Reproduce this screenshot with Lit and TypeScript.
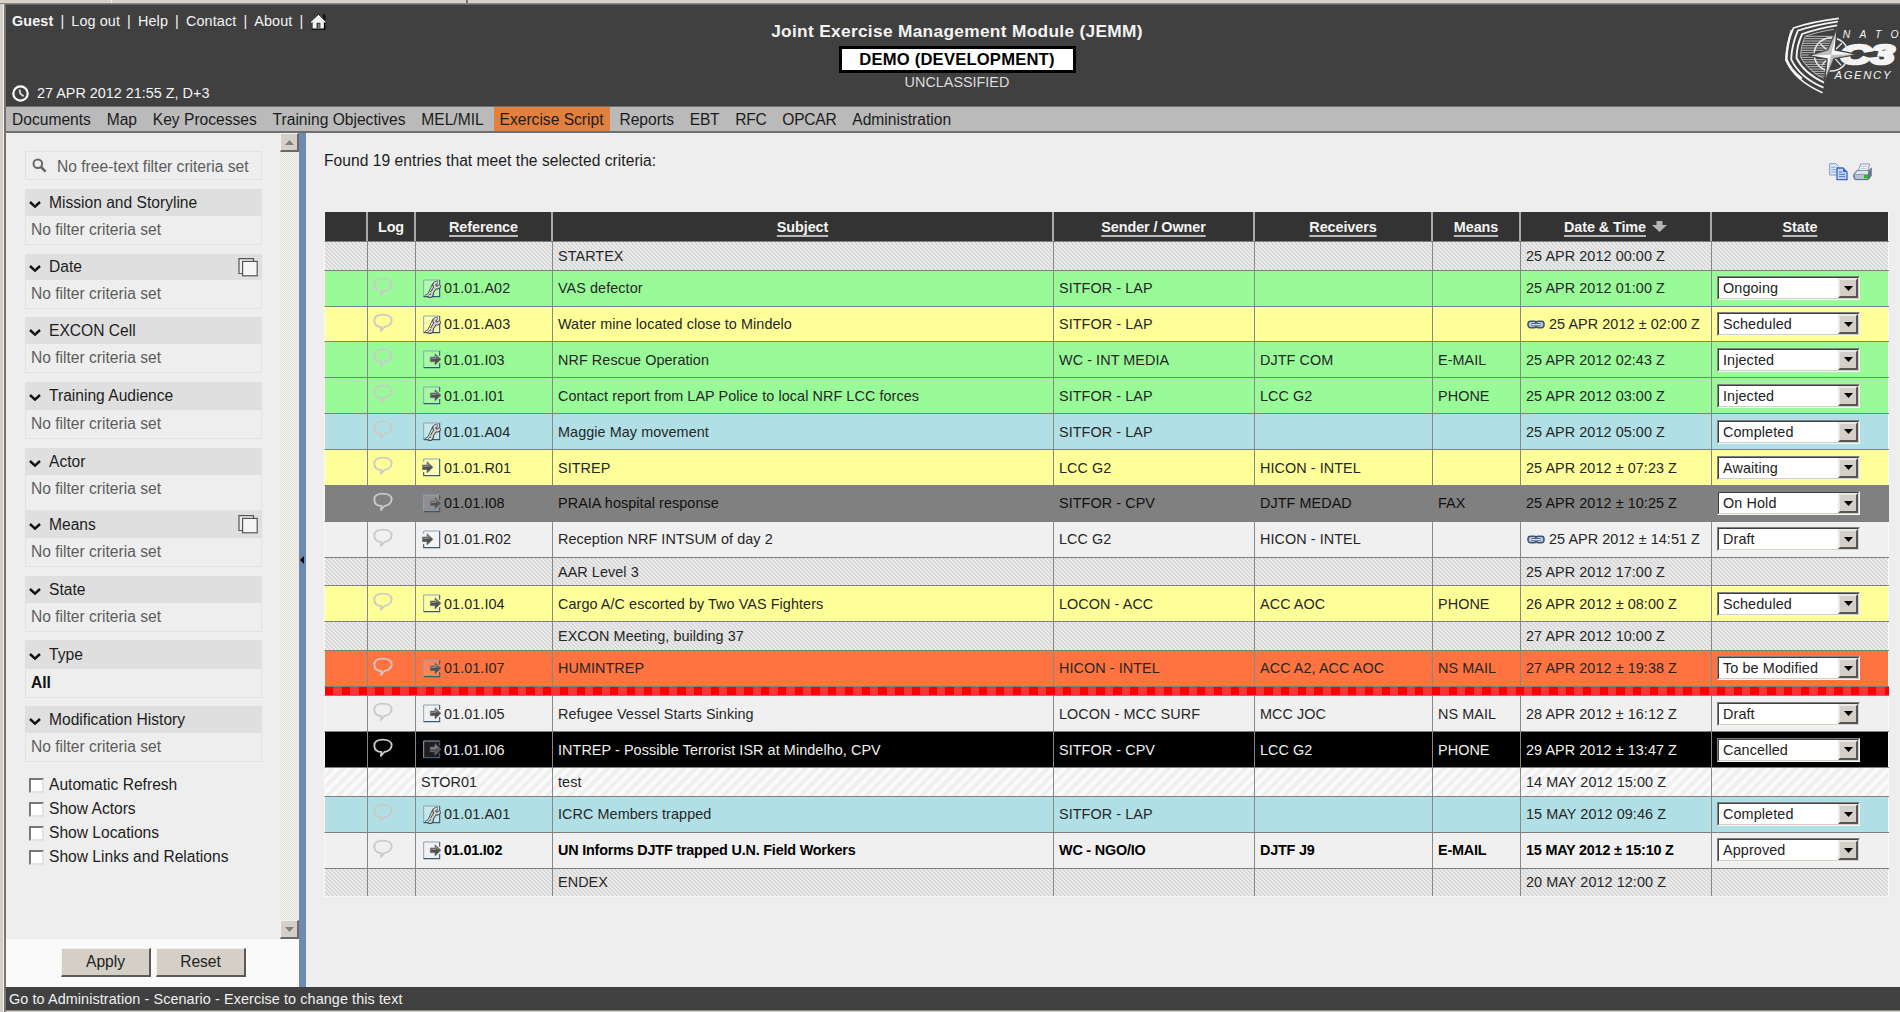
import { LitElement, html, css, svg, nothing } from "lit";
import { customElement, property } from "lit/decorators.js";

type Kind = "action" | "inject" | "report";
interface Entry {
  tone: string;
  icon?: Kind;
  ref?: string;
  subject?: string;
  sender?: string;
  receivers?: string;
  means?: string;
  linked?: boolean;
  date?: string;
  state?: string;
}

const entries: Entry[] = [
  { tone: "marker", subject: "STARTEX", date: "25 APR 2012 00:00 Z" },
  { tone: "green", icon: "action", ref: "01.01.A02", subject: "VAS defector", sender: "SITFOR - LAP", date: "25 APR 2012 01:00 Z", state: "Ongoing" },
  { tone: "yellow", icon: "action", ref: "01.01.A03", subject: "Water mine located close to Mindelo", sender: "SITFOR - LAP", linked: true, date: "25 APR 2012 ± 02:00 Z", state: "Scheduled" },
  { tone: "green", icon: "inject", ref: "01.01.I03", subject: "NRF Rescue Operation", sender: "WC - INT MEDIA", receivers: "DJTF COM", means: "E-MAIL", date: "25 APR 2012 02:43 Z", state: "Injected" },
  { tone: "green", icon: "inject", ref: "01.01.I01", subject: "Contact report from LAP Police to local NRF LCC forces", sender: "SITFOR - LAP", receivers: "LCC G2", means: "PHONE", date: "25 APR 2012 03:00 Z", state: "Injected" },
  { tone: "blue", icon: "action", ref: "01.01.A04", subject: "Maggie May movement", sender: "SITFOR - LAP", date: "25 APR 2012 05:00 Z", state: "Completed" },
  { tone: "yellow", icon: "report", ref: "01.01.R01", subject: "SITREP", sender: "LCC G2", receivers: "HICON - INTEL", date: "25 APR 2012 ± 07:23 Z", state: "Awaiting" },
  { tone: "hold", icon: "inject", ref: "01.01.I08", subject: "PRAIA hospital response", sender: "SITFOR - CPV", receivers: "DJTF MEDAD", means: "FAX", date: "25 APR 2012 ± 10:25 Z", state: "On Hold" },
  { tone: "plain", icon: "report", ref: "01.01.R02", subject: "Reception NRF INTSUM of day 2", sender: "LCC G2", receivers: "HICON - INTEL", linked: true, date: "25 APR 2012 ± 14:51 Z", state: "Draft" },
  { tone: "marker", subject: "AAR Level 3", date: "25 APR 2012 17:00 Z" },
  { tone: "yellow", icon: "inject", ref: "01.01.I04", subject: "Cargo A/C escorted by Two VAS Fighters", sender: "LOCON - ACC", receivers: "ACC AOC", means: "PHONE", date: "26 APR 2012 ± 08:00 Z", state: "Scheduled" },
  { tone: "marker", subject: "EXCON Meeting, building 37", date: "27 APR 2012 10:00 Z" },
  { tone: "orange", icon: "inject", ref: "01.01.I07", subject: "HUMINTREP", sender: "HICON - INTEL", receivers: "ACC A2, ACC AOC", means: "NS MAIL", date: "27 APR 2012 ± 19:38 Z", state: "To be Modified" },
  { tone: "now" },
  { tone: "plain", icon: "inject", ref: "01.01.I05", subject: "Refugee Vessel Starts Sinking", sender: "LOCON - MCC SURF", receivers: "MCC JOC", means: "NS MAIL", date: "28 APR 2012 ± 16:12 Z", state: "Draft" },
  { tone: "cancelled", icon: "inject", ref: "01.01.I06", subject: "INTREP - Possible Terrorist ISR at Mindelho, CPV", sender: "SITFOR - CPV", receivers: "LCC G2", means: "PHONE", date: "29 APR 2012 ± 13:47 Z", state: "Cancelled" },
  { tone: "story", ref: "STOR01", subject: "test", date: "14 MAY 2012 15:00 Z" },
  { tone: "blue", icon: "action", ref: "01.01.A01", subject: "ICRC Members trapped", sender: "SITFOR - LAP", date: "15 MAY 2012 09:46 Z", state: "Completed" },
  { tone: "plain strong", icon: "inject", ref: "01.01.I02", subject: "UN Informs DJTF trapped U.N. Field Workers", sender: "WC - NGO/IO", receivers: "DJTF J9", means: "E-MAIL", date: "15 MAY 2012 ± 15:10 Z", state: "Approved" },
  { tone: "marker", subject: "ENDEX", date: "20 MAY 2012 12:00 Z" },
];

/* Filter panels: title, heading height, body height, gap below. */
const filters: { title: string; head: number; body: number; gap: number; multi?: boolean; value?: string }[] = [
  { title: "Mission and Storyline", head: 27, body: 28, gap: 10 },
  { title: "Date", head: 26, body: 28, gap: 9, multi: true },
  { title: "EXCON Cell", head: 27, body: 28, gap: 10 },
  { title: "Training Audience", head: 28, body: 28, gap: 10 },
  { title: "Actor", head: 27, body: 36, gap: 0 },
  { title: "Means", head: 27, body: 28, gap: 10, multi: true },
  { title: "State", head: 27, body: 28, gap: 9 },
  { title: "Type", head: 29, body: 28, gap: 9, value: "All" },
  { title: "Modification History", head: 27, body: 28, gap: 12 },
];

const menu = ["Documents", "Map", "Key Processes", "Training Objectives", "MEL/MIL", "Exercise Script", "Reports", "EBT", "RFC", "OPCAR", "Administration"];

const bubble = html`<svg class="bubble" viewBox="0 0 60 60" width="20" height="20">
  <path d="M25 42C13 41 4 34 4 23C4 12 14 5 30 5C46 5 56 12 56 22C56 33 46 41 34 42L24 54Z" fill="none" stroke="#cacaca" stroke-width="5.5" stroke-linejoin="round"/>
</svg>`;

const linkIcon = html`<svg class="link" viewBox="0 0 54 27" width="18" height="9">
  <rect x="3" y="4" width="26" height="19" rx="8" fill="#b9c8da" stroke="#3a5274" stroke-width="4.5"/>
  <rect x="26" y="4" width="25" height="19" rx="8" fill="#b9c8da" stroke="#3a5274" stroke-width="4.5"/>
  <path d="M14 14H40" stroke="#3a5274" stroke-width="9"/><path d="M15 14H39" stroke="#dfe8f2" stroke-width="4"/>
</svg>`;

const frame = svg`<path d="M3 54V3H51" fill="none" stroke="#8fa3b8" stroke-width="3"/>`;

const kindIcons = {
  action: html`<svg viewBox="-2 0 57 57" width="19" height="19">
    <rect x="3" y="3" width="48" height="50" fill="#fff" opacity=".25"/>${frame}
    <path d="M51 3V53H3" fill="none" stroke="#3c5878" stroke-width="3.4"/>
    <path d="M6 50L16 44L30 14L40 8" fill="none" stroke="#555" stroke-width="3"/>
    <g fill="none" stroke="#3a3a3a" stroke-width="11.5">
      <path d="M27 42L39 23"/><path d="M45 10C36 10 32 18 37 23C42 28 50 25 51 18"/><path d="M17 49C24 54 30 48 27 41"/>
    </g>
    <g fill="none" stroke="#d2d2d2" stroke-width="6.5">
      <path d="M27 42L39 23"/><path d="M44 10C36 10 32 18 37 23C42 28 50 25 51 19"/><path d="M18 49C24 53 30 48 27 41"/>
    </g>
  </svg>`,
  inject: html`<svg viewBox="-2 0 57 57" width="19" height="19">
    <rect x="3" y="3" width="48" height="50" fill="#fff" opacity=".12"/>${frame}
    <path d="M51 3V17M51 39V53H3" fill="none" stroke="#3c5878" stroke-width="3.4"/>
    <path d="M23 21H37V11L55 28L37 45V35H23Z" fill="#505050" stroke="#777" stroke-width="2"/>
    <path d="M25 25H39V18L47 26" fill="none" stroke="#999" stroke-width="3"/>
  </svg>`,
  report: html`<svg viewBox="-2 0 57 57" width="19" height="19">
    <rect x="3" y="3" width="48" height="50" fill="#fff" opacity=".3"/>
    <path d="M3 12V3H51" fill="none" stroke="#8fa3b8" stroke-width="3"/>
    <path d="M51 3V53H3V42" fill="none" stroke="#3c5878" stroke-width="3.4"/>
    <path d="M-1 21H13V11L31 28L13 45V35H-1Z" fill="#505050" stroke="#777" stroke-width="2"/>
    <path d="M1 25H15V18L23 26" fill="none" stroke="#999" stroke-width="3"/>
  </svg>`,
};

@customElement("state-select")
class StateSelect extends LitElement {
  @property() value = "";
  static styles = css`
    :host { display: flex; box-sizing: border-box; width: 143px; height: 24px; background: #fff;
      border: 1px solid; border-color: #808080 #f4f4f0 #f4f4f0 #808080; }
    .inner { flex: 1; display: flex; justify-content: space-between; border: 1px solid; border-color: #404040 #d4d0c8 #d4d0c8 #404040; }
    .text { padding-left: 4px; line-height: 20px; color: #222; letter-spacing: .1px; }
    .drop { box-sizing: border-box; width: 20px; display: flex; align-items: center; justify-content: center; background: #d4d0c8;
      border: 2px solid; border-color: #eae8e2 #555 #555 #eae8e2; }
  `;
  render() {
    return html`<div class="inner"><span class="text">${this.value}</span>
      <span class="drop"><svg width="9" height="5" viewBox="0 0 9 5"><path d="M0 0H9L4.5 5Z" fill="#000"/></svg></span></div>`;
  }
}

@customElement("filter-panel")
class FilterPanel extends LitElement {
  @property() heading = "";
  @property() value = "";
  @property({ type: Boolean }) multi = false;
  static styles = css`
    :host { display: flex; flex-direction: column; box-sizing: border-box; }
    .head { box-sizing: border-box; flex: none; height: var(--head); background: #dfdfdf; display: flex; align-items: center; padding: 0 4px 0 4px; color: #1d1d1d; }
    .title { flex: 1; padding-left: 8px; line-height: 24px; }
    .chev { margin-top: 3px; }
    .body { flex: 1; border: 1px solid #e2e2e2; border-top: 0; padding-left: 5px; line-height: 28px; color: #5c5c5c; }
    .set { color: #111; font-weight: bold; }
  `;
  render() {
    return html`<div class="head">
        <svg class="chev" width="12" height="9" viewBox="0 0 12 9"><path d="M1 2L6 6.6L11 2" fill="none" stroke="#111" stroke-width="2.5"/></svg>
        <span class="title">${this.heading}</span>
        ${this.multi ? html`<svg width="20" height="19" viewBox="0 0 20 19">
          <path d="M4 15.5H1V.7H15.5V3" fill="#eee" stroke="#555" stroke-width="1.2"/><rect x="4.6" y="3.4" width="14.6" height="14.4" fill="#f5f5f5" stroke="#555" stroke-width="1.2"/></svg>` : nothing}
      </div>
      <div class="body ${this.value ? "set" : ""}">${this.value || "No filter criteria set"}</div>`;
  }
}

@customElement("app-root")
class AppRoot extends LitElement {
  static styles = css`
    :host { display: block; width: 1900px; height: 1012px; overflow: hidden; background: #d4d0c8; font: 14.4px "Liberation Sans", Arial, sans-serif; color: #262626; }
    * { box-sizing: border-box; }
    .top { height: 4px; display: flex; background: #d6d2ca; border-bottom: 1px solid #8b8984; }
    .tick { width: 112px; border-right: 1px solid #f2f0ec; }
    .tick2 { width: 356px; border-right: 2px solid #77746e; }
    .window { height: 1008px; border-left: 3px solid #d4d0c8; padding-left: 1px; display: flex; flex-direction: column; background: linear-gradient(90deg, #f4f2ee 0 1px, #d4d0c8 0); }
    .frame { flex: 1; display: flex; flex-direction: column; border-left: 2px solid #77746f; min-height: 0; }
    .banner { flex: none; height: 102px; background: #404040; color: #f4f4f4; display: grid; grid-template-columns: 700px 502px 1fr; border-top: 1px solid #666; }
    .left { display: flex; flex-direction: column; justify-content: space-between; padding: 7px 0 4px 6px; }
    .links, .clock { display: flex; align-items: center; }
    .links { height: 18px; letter-spacing: .1px; }
    .bar { width: 18px; text-align: center; }
    .clock { height: 18px; gap: 8px; }
    .mid { display: flex; flex-direction: column; align-items: center; padding-top: 16px; }
    .title { font-size: 17.3px; letter-spacing: .32px; font-weight: bold; line-height: 20px; }
    .demo { width: 237px; height: 27px; margin-top: 5px; border: 3px solid #000; background: #fff; color: #000; font-size: 16.6px; letter-spacing: .2px; font-weight: bold; text-align: center; line-height: 21px; }
    .class { line-height: 18px; color: #ddd; }
    .right { display: flex; justify-content: flex-end; padding-top: 10px; overflow: hidden; }
    .menu { flex: none; height: 27px; background: #bababa; border: solid #6f6f6f; border-width: 1px 0 2px; display: flex; font-size: 15.6px; color: #1c1c1c; }
    .item { padding: 0 7.9px; line-height: 26px; white-space: nowrap; }
    .item:first-child { padding-left: 6px; }
    .caps { letter-spacing: -.25px; }
    .item.on { background: #e2803c; padding: 0 6px; margin: 0 2px; }
    .main { flex: 1; display: flex; background: #eee; min-height: 0; }
    .side { width: 293px; display: flex; flex-direction: column; font-size: 15.6px; }
    .scroller { flex: 1; display: flex; min-height: 0; }
    .filters { width: 274px; padding: 18px 18px 0 19px; }
    .search { height: 29px; margin-bottom: 9px; border: 1px solid #e2e2e2; display: flex; align-items: center; padding-left: 6px; gap: 10px; color: #5c5c5c; }
    .search span { padding-top: 2px; }
    .check { display: flex; align-items: center; height: 24px; padding-left: 4px; gap: 5px; color: #1d1d1d; }
    .box { width: 15px; height: 15px; background: #fff; border: 2px solid; border-color: #777 #e4e2dc #e4e2dc #777; }
    .track { width: 19px; display: flex; flex-direction: column; justify-content: space-between; background: repeating-conic-gradient(#e6e3dd 0 25%, #f2f1ee 0 50%) 0 0 / 2px 2px; }
    .arrow { height: 19px; display: flex; align-items: center; justify-content: center; background: #d4d0c8; border: solid; border-width: 1px 2px 2px 1px; border-color: #f3f1ec #6b6964 #6b6964 #f3f1ec; }
    .buttons { height: 48px; background: #fafafa; display: flex; gap: 5px; padding: 9px 0 0 55px; }
    .button { width: 90px; height: 29px; background: #d4d0c8; border: solid; border-width: 1px 2px 2px 1px; border-color: #f3f1ec #5c5a56 #5c5a56 #f3f1ec; text-align: center; line-height: 26px; color: #222; }
    .split { width: 7px; background: #6d8ab0; display: flex; align-items: center; }
    .content { flex: 1; padding: 0 11px 0 18px; min-width: 0; }
    .found { height: 30px; padding-top: 19px; font-size: 15.6px; letter-spacing: .04px; line-height: 18px; color: #1d1d1d; }
    .tools { display: flex; justify-content: flex-end; gap: 5px; padding-right: 17px; height: 49px; }
    .row { display: grid; grid-template-columns: 43px 48px 137px 501px 201px 178px 88px 191px 1fr; height: 35.88px; border-bottom: 1px solid #808080; border-left: 1px solid #f8f8f8; letter-spacing: .07px; }
    .row:last-child { border-bottom-color: #f8f8f8; }
    .cell { border-right: 1px solid #888; padding-left: 5px; display: flex; align-items: center; white-space: nowrap; min-width: 0; }
    .cell:last-child { border-right-color: #f8f8f8; }
    .head { height: 30px; background: #333; color: #f4f4f4; font-weight: bold; letter-spacing: -.08px; }
    .head .cell { justify-content: center; padding: 0; border-right: 2px solid #aaa; }
    .head .cell:last-child { border-right: 1px solid #f8f8f8; }
    .head u { text-decoration-color: #bbb; text-decoration-thickness: 1.5px; text-underline-offset: 3px; text-decoration-skip-ink: none; }
    .sort { margin-left: 6px; }
    .ref { padding-left: 5px; }
    .ref svg { margin: 0 3px 0 1px; }
    .log { padding-left: 5px; padding-bottom: 3px; }
    .link { margin: 0 4px 0 1px; }
    .marker, .story { height: 28.7px; }
    .marker { background: linear-gradient(45deg, #d6d6d6 25%, #ececec 25% 50%, #d6d6d6 50% 75%, #ececec 75%) 0 0 / 4px 4px; }
    .story { background: linear-gradient(135deg, #fafafa 25%, #efefef 25% 50%, #fafafa 50% 75%, #efefef 75%) 0 0 / 11px 11px; }
    .green { background: #98fb98; }
    .yellow { background: #ffff99; }
    .blue { background: #b0e0e6; }
    .hold { background: #808080; color: #111; }
    .hold .cell { border-right-color: #808080; }
    .plain { background: #f0f0f0; }
    .orange { background: #ff7340; }
    .cancelled { background: #000; color: #f0f0f0; }
    .strong { font-weight: bold; color: #000; letter-spacing: -.2px; }
    .strong state-select { font-weight: normal; }
    .now { height: 9.57px; background: repeating-linear-gradient(90deg, #f00 0 8.4px, #f33 8.4px 16.77px); }
    .footer { flex: none; height: 23px; background: #404040; color: #f0f0f0; line-height: 24px; padding-left: 3px; letter-spacing: .09px; }
    .edge { flex: none; height: 2px; background: #d4d0c8; border-top: 1px solid #8b8984; }
  `;

  logo() {
    return html`<svg width="117" height="80" viewBox="250 45 350 240">
      <g fill="none" stroke="#f4f4f4">
        <path d="M417 55C370 61 320 70 281 84C268 112 260 145 258 180C275 220 315 255 368 278" stroke-width="5"/>
        <path d="M276 90C266 120 260 150 260 178C268 200 285 220 306 236" stroke-width="7"/>
        <path d="M414 65C372 71 330 80 294 92C280 125 275 150 274 178C290 212 325 243 371 263" stroke-width="5.5"/>
        <path d="M412 76C375 82 340 90 307 102C294 130 290 155 290 174C305 205 335 230 373 248" stroke-width="5.5"/>
        <path d="M402 88C370 93 345 99 316 109C305 135 302 155 303 172C315 195 340 220 372 235" stroke-width="2"/>
        <path d="M318 109H408M314 116H408M311 123H408M309 130H400M307 137H398M305 144H396M304 151H390M303 158H340M303 165H330M303 172H340M306 179H384M311 186H382M317 193H380M322 200H378M328 207H376M336 214H376M344 221H376M354 228H376" stroke-width="3" stroke="#bbb"/>
      </g>
      <g fill="#f4f4f4" font-family="Liberation Sans, Arial, sans-serif" font-style="italic">
        <text x="429" y="113" font-size="31" textLength="167">NATO</text>
        <text x="420" y="193" font-size="82" font-weight="bold" textLength="164" lengthAdjust="spacingAndGlyphs" stroke="#f4f4f4" stroke-width="8">C3</text>
        <text x="404" y="237" font-size="34" textLength="168">AGENCY</text>
      </g>
      <ellipse cx="394" cy="163" rx="51" ry="50" fill="none" stroke="#e8e8e8" stroke-width="4.5"/>
      <path d="M362 132L388 156M424 196L400 170M366 196L388 170M426 130L400 156" stroke="#e8e8e8" stroke-width="4"/>
      <path d="M412 83L406 150L472 163L402 176L374 246L382 177L326 167L384 150Z" fill="#fafafa" stroke="#404040" stroke-width="4"/>
      <path d="M412 83L394 164L384 150ZM472 163L394 164L402 176ZM374 246L394 164L402 176ZM326 167L394 164L384 150Z" fill="#8c8c8c" opacity=".55"/>
    </svg>`;
  }

  row(e: Entry) {
    if (e.tone === "now") return html`<div class="row now"></div>`;
    return html`<div class="row ${e.tone}">
      <div class="cell"></div>
      <div class="cell log">${e.state ? bubble : nothing}</div>
      <div class="cell ref">${e.icon ? kindIcons[e.icon] : nothing}<span>${e.ref}</span></div>
      <div class="cell">${e.subject}</div>
      <div class="cell">${e.sender}</div>
      <div class="cell">${e.receivers}</div>
      <div class="cell">${e.means}</div>
      <div class="cell">${e.linked ? linkIcon : nothing}${e.date}</div>
      <div class="cell">${e.state ? html`<state-select value=${e.state}></state-select>` : nothing}</div>
    </div>`;
  }

  render() {
    return html`
      <div class="top"><div class="tick"></div><div class="tick2"></div></div>
      <div class="window"><div class="frame">
        <div class="banner">
          <div class="left">
            <div class="links"><b>Guest</b><span class="bar">|</span><span>Log out</span><span class="bar">|</span><span>Help</span><span class="bar">|</span><span>Contact</span><span class="bar">|</span><span>About</span><span class="bar">|</span>
              <svg width="17" height="17" viewBox="0 0 54 54"><path d="M41 4H49V30L41 20Z" fill="#111"/><path d="M6 28V53H49V28Z" fill="#000"/><path d="M8 28L27 8L44 28V49H8Z" fill="#f2f2f2"/><path d="M2 30L27 5L52 30" fill="none" stroke="#000" stroke-width="3"/><path d="M4 30L27 8L49 30" fill="none" stroke="#fff" stroke-width="4"/><path d="M21 49V31H33V49Z" fill="#333"/><path d="M26 49V34H30V49Z" fill="#999"/></svg>
            </div>
            <div class="clock"><svg width="17" height="17" viewBox="0 0 17 17"><circle cx="8.5" cy="8.5" r="7.2" fill="none" stroke="#fff" stroke-width="2.2"/><path d="M7.5 4.5L8.3 8.6L11.6 11.2" fill="none" stroke="#ddd" stroke-width="1.8"/></svg><span>27 APR 2012 21:55 Z, D+3</span></div>
          </div>
          <div class="mid"><div class="title">Joint Exercise Management Module (JEMM)</div><div class="demo">DEMO (DEVELOPMENT)</div><div class="class">UNCLASSIFIED</div></div>
          <div class="right">${this.logo()}</div>
        </div>
        <div class="menu">${menu.map((m) => html`<div class="item ${m === "Exercise Script" ? "on" : /^[A-Z]+$/.test(m) ? "caps" : ""}">${m}</div>`)}</div>
        <div class="main">
          <div class="side">
            <div class="scroller">
              <div class="filters">
                <div class="search"><svg width="15" height="15" viewBox="0 0 15 15"><circle cx="5.8" cy="5.8" r="4.3" fill="none" stroke="#666" stroke-width="2"/><path d="M9 9L13.6 13.6" stroke="#666" stroke-width="2.6"/></svg><span>No free-text filter criteria set</span></div>
                ${filters.map((f) => html`<filter-panel heading=${f.title} value=${f.value ?? ""} ?multi=${f.multi}
                  style="--head:${f.head}px;height:${f.head + f.body}px;margin-bottom:${f.gap}px"></filter-panel>`)}
                ${["Automatic Refresh", "Show Actors", "Show Locations", "Show Links and Relations"].map((c) => html`<div class="check"><div class="box"></div><span>${c}</span></div>`)}
              </div>
              <div class="track">
                <div class="arrow"><svg width="9" height="5"><path d="M0 5H9L4.5 0Z" fill="#808080"/></svg></div>
                <div class="arrow"><svg width="9" height="5"><path d="M0 0H9L4.5 5Z" fill="#808080"/></svg></div>
              </div>
            </div>
            <div class="buttons"><div class="button">Apply</div><div class="button">Reset</div></div>
          </div>
          <div class="split"><svg width="5" height="8"><path d="M5 0V8L1 4Z" fill="#000"/></svg></div>
          <div class="content">
            <div class="found">Found 19 entries that meet the selected criteria:</div>
            <div class="tools">
              <svg width="19" height="18" viewBox="0 0 57 54"><path d="M2 2H20L29 11V36H2Z" fill="#dce7fa" stroke="#7f9cd0" stroke-width="3"/><path d="M7 13H20M7 20H24M7 27H24" stroke="#8aa6d8" stroke-width="3"/><path d="M24 15H42L54 27V50H24Z" fill="#c4d6f8" stroke="#3f68bd" stroke-width="4"/><path d="M42 15V27H54Z" fill="#3f68bd"/><path d="M30 27H39M30 34H48M30 41H48" stroke="#4a72c8" stroke-width="3"/></svg>
              <svg width="19" height="18" viewBox="0 0 57 54"><path d="M23 3H50L44 26H15Z" fill="#f4f8fc" stroke="#8b9bb0" stroke-width="3"/><path d="M25 10H43M23 17H41" stroke="#b7c4d4" stroke-width="3"/><path d="M11 23H47L55 15V38L46 50H6L2 43V34Z" fill="#66788f" stroke="#4f5f75" stroke-width="2"/><path d="M4 35H45V48H7Z" fill="#b4c2d2"/><path d="M4 34L13 24H46L44 34Z" fill="#dce5ee"/><rect x="33" y="36" width="12" height="10" fill="#14c914"/></svg>
            </div>
            <div class="row head">
              <div class="cell"></div><div class="cell">Log</div><div class="cell"><u>Reference</u></div><div class="cell"><u>Subject</u></div><div class="cell"><u>Sender / Owner</u></div><div class="cell"><u>Receivers</u></div><div class="cell"><u>Means</u></div>
              <div class="cell"><u>Date &amp; Time</u><svg class="sort" width="15" height="11" viewBox="0 0 15 11"><path d="M4.5 0H10.5V4H15L7.5 11L0 4H4.5Z" fill="#b4b4b4"/></svg></div><div class="cell"><u>State</u></div>
            </div>
            ${entries.map((e) => this.row(e))}
          </div>
        </div>
        <div class="footer">Go to Administration - Scenario - Exercise to change this text</div>
        <div class="edge"></div>
      </div></div>`;
  }
}
